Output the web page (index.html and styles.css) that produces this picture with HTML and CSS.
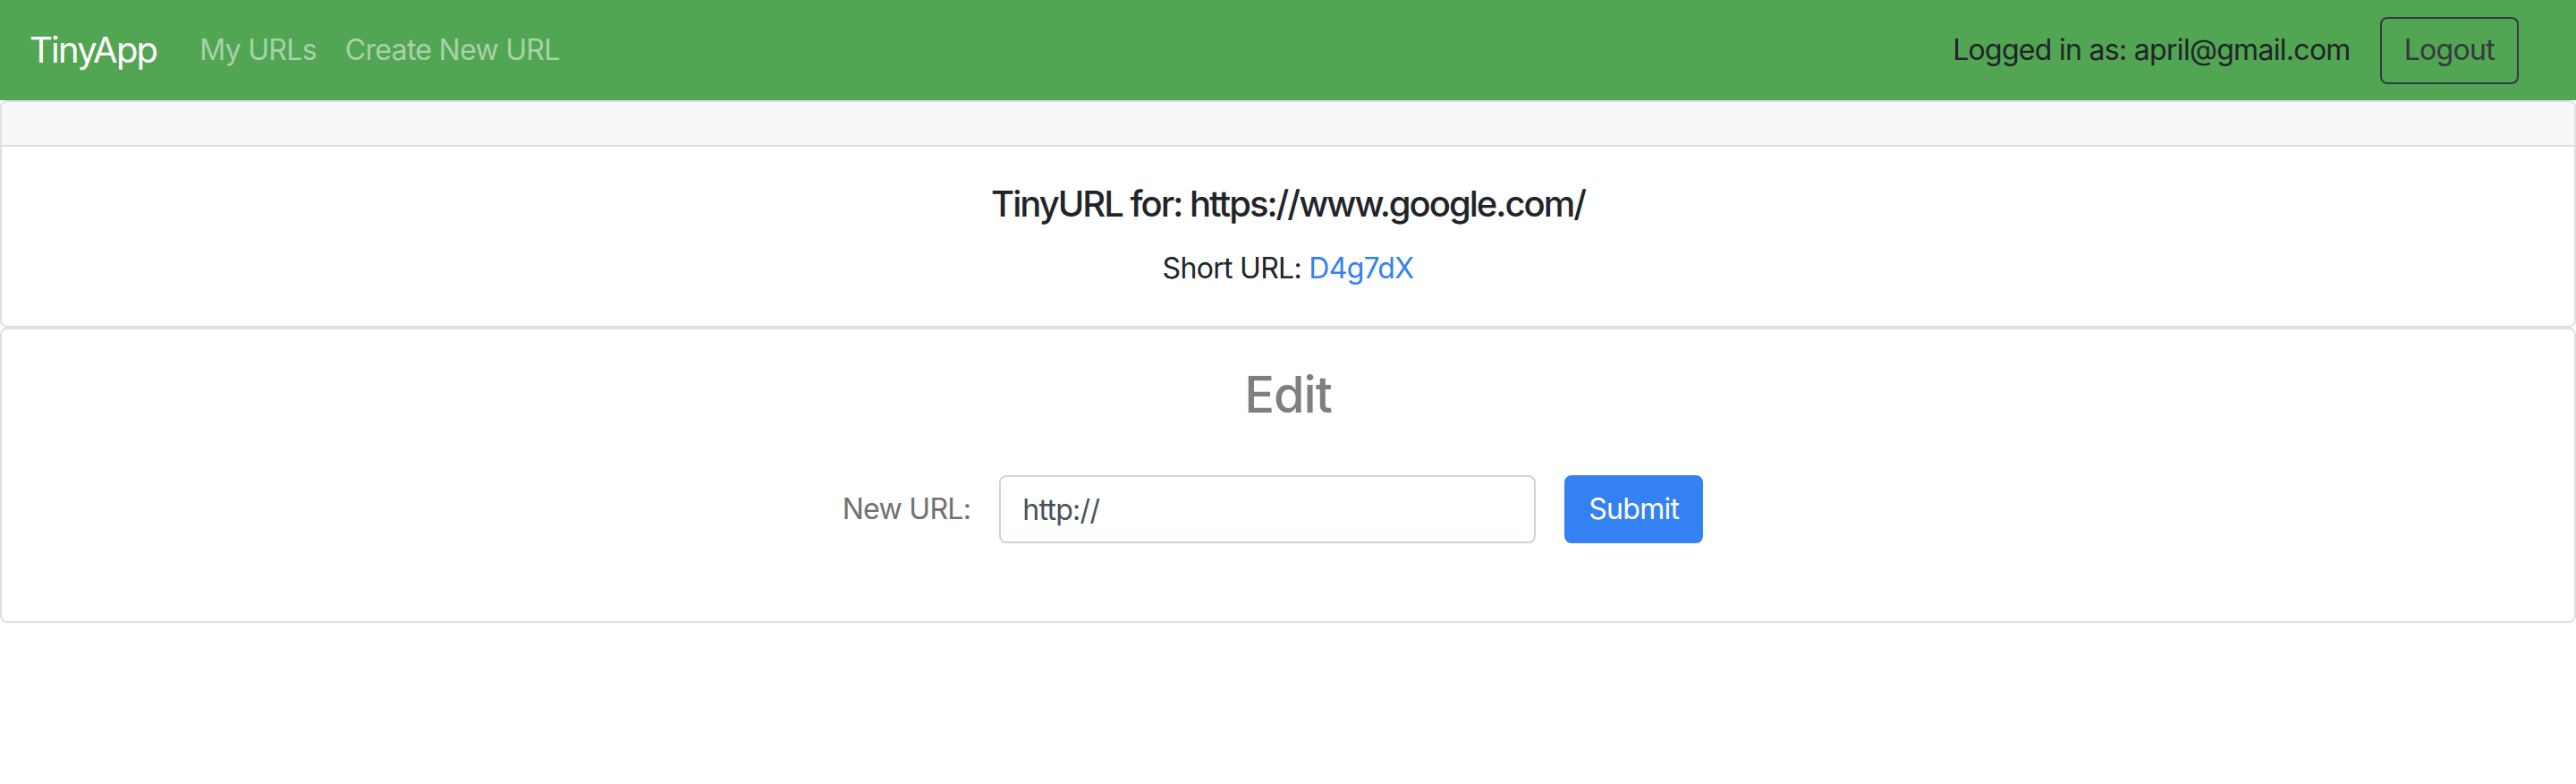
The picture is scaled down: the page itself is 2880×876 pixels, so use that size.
FILE: index.html
```html
<!DOCTYPE html>
<html lang="en">
<head>
<meta charset="utf-8">
<title>TinyApp</title>
<link rel="stylesheet" href="styles.css">
</head>
<body>
<nav class="navbar">
  <a class="brand" href="#">TinyApp</a>
  <div class="nav-links">
    <a class="nav-link" href="#">My URLs</a>
    <a class="nav-link" href="#">Create New URL</a>
  </div>
  <div class="nav-right">
    <span class="user">Logged in as: april@gmail.com</span>
    <button class="btn-logout" type="button">Logout</button>
  </div>
</nav>
<main>
  <section class="card">
    <div class="card-header"></div>
    <div class="card-body">
      <h5 class="card-title">TinyURL for: https://www.google.com/</h5>
      <p class="card-text">Short URL: <a class="short-link" href="#">D4g7dX</a></p>
    </div>
  </section>
  <section class="card">
    <div class="card-body">
      <h3 class="edit-title">Edit</h3>
      <form class="edit-form">
        <label class="edit-label" for="newurl">New URL:</label>
        <input class="edit-input" id="newurl" type="text" value="http://">
        <button class="btn-submit" type="button">Submit</button>
      </form>
    </div>
  </section>
</main>
</body>
</html>
```

FILE: styles.css
```css
* { box-sizing: border-box; }

html, body {
  margin: 0;
  padding: 0;
  background: #ffffff;
}

body {
  font-family: "Inter", "Liberation Sans", sans-serif;
  font-size: 32px;
  line-height: 1.5;
  letter-spacing: -0.7px;
  color: #212529;
}

.navbar {
  display: flex;
  align-items: center;
  height: 112px;
  padding: 0 64px 0 33px;
  background: #52a552;
}

.brand {
  font-size: 40px;
  color: #ffffff;
  text-decoration: none;
  margin-right: 32px;
  letter-spacing: -1.8px;
}

.nav-links {
  display: flex;
  align-items: center;
  flex: 1;
}

.nav-link {
  color: rgba(255, 255, 255, 0.5);
  text-decoration: none;
  padding: 0 16px;
}

.nav-right {
  display: flex;
  align-items: center;
  gap: 33px;
}

.user {
  color: #212529;
}

.btn-logout {
  font: inherit;
  letter-spacing: inherit;
  color: #343a40;
  background: transparent;
  border: 2px solid #343a40;
  border-radius: 8px;
  height: 75px;
  padding: 0 25px;
  line-height: 1;
}

main {
  display: flex;
  flex-direction: column;
}

.card {
  border: 2px solid #dfdfdf;
  border-radius: 8px;
  background: #ffffff;
  overflow: hidden;
}

.card-header {
  height: 50px;
  background: #f7f7f7;
  border-bottom: 2px solid #dfdfdf;
}

.card-body {
  padding: 40px;
  text-align: center;
}

.card-title {
  margin: 0 0 24px;
  font-size: 40px;
  font-weight: 500;
  line-height: 1.2;
  letter-spacing: -2px;
  color: #212529;
}

.card-text {
  margin: 0;
  color: #212529;
}

.short-link {
  color: #3381f2;
  text-decoration: none;
}

.edit-title {
  margin: 0 0 56px;
  font-size: 56px;
  font-weight: 500;
  line-height: 1.2;
  letter-spacing: -1px;
  color: #7f7f7f;
}

.edit-form {
  display: flex;
  align-items: center;
  justify-content: center;
  gap: 32px;
  padding-right: 34px;
  margin-bottom: 47px;
}

.edit-label {
  color: #707070;
}

.edit-input {
  width: 600px;
  height: 76px;
  padding: 0 24px;
  font: inherit;
  letter-spacing: inherit;
  color: #495057;
  border: 2px solid #ced4da;
  border-radius: 8px;
  background: #ffffff;
}

.btn-submit {
  font: inherit;
  letter-spacing: inherit;
  color: #ffffff;
  background: #3381f2;
  border: 2px solid #3381f2;
  border-radius: 8px;
  height: 76px;
  padding: 0 25px;
  line-height: 1;
}
```
